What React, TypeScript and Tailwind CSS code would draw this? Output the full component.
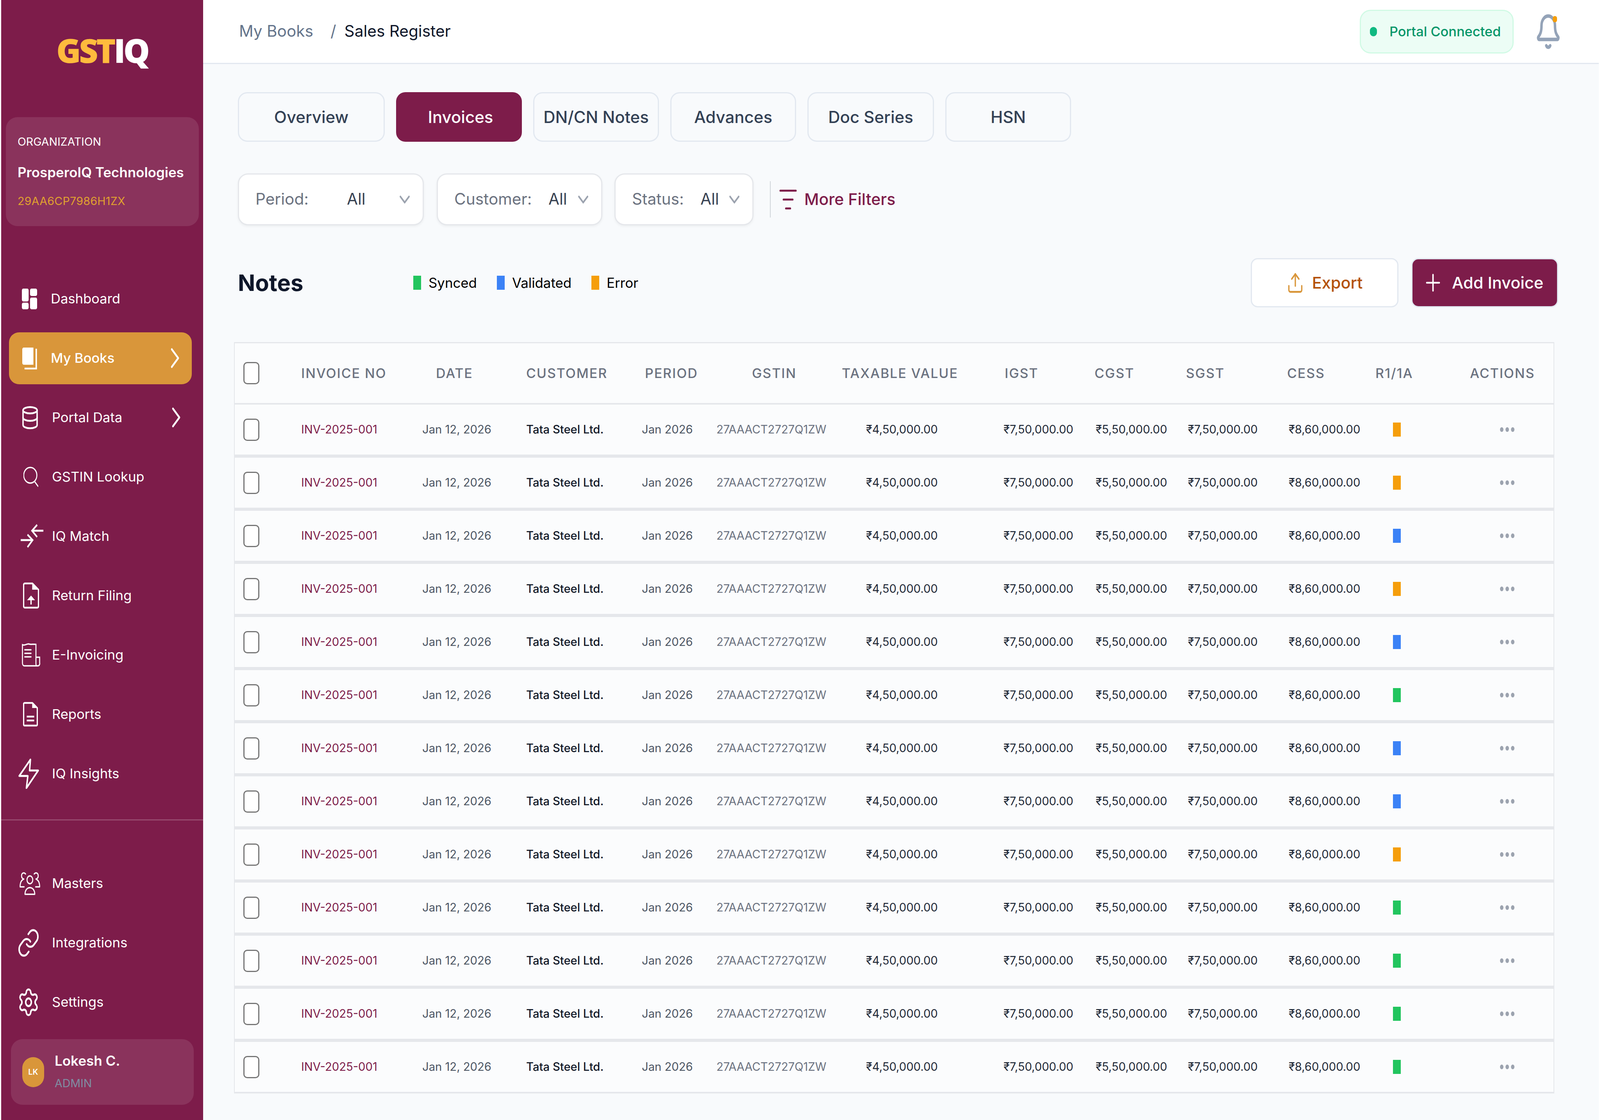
import React from 'react';
import { Bell, ChevronDown, ChevronRight, Database, Link, ListFilter, Plus, Settings, Upload } from 'lucide-react';

// the window is 4096 wide, so horizontal sizes are the reference's x 0.731
const DashboardIcon = () => (
  <svg viewBox="0 0 54 53" preserveAspectRatio="none" className="w-[39px] h-[53px] ml-[12px]" fill="white">
    <rect x="0" y="0" width="24" height="33" rx="5" />
    <rect x="29" y="0" width="25" height="19" rx="5" />
    <rect x="0" y="36" width="24" height="17" rx="5" />
    <rect x="29" y="23" width="25" height="30" rx="5" />
  </svg>
);

const BookIcon = () => (
  <svg viewBox="0 0 52 57" preserveAspectRatio="none" className="w-[38px] h-[57px] ml-[13px]" fill="none">
    <path d="M5 1H39V45H5a5 5 0 0 1-5-5V6a5 5 0 0 1 5-5Z" fill="white" />
    <path d="M49 4V55H8" stroke="white" strokeWidth="5" />
  </svg>
);

const SearchIcon = () => (
  <svg viewBox="0 0 52 52" preserveAspectRatio="none" className="w-[38px] h-[52px] ml-[16px]" fill="none" stroke="white" strokeWidth="3.5" strokeLinecap="round">
    <ellipse cx="24" cy="22" rx="23" ry="20" />
    <path d="M39 38L51 50" />
  </svg>
);

const MatchIcon = () => (
  <svg viewBox="0 0 80 62" preserveAspectRatio="none" className="w-[58px] h-[62px] ml-[9px]" fill="none" stroke="white" strokeWidth="5">
    <path d="M39 17H80M58 2L40 17L58 33" />
    <path d="M0 41H42M24 27L42 41L24 59" />
  </svg>
);

const ReturnIcon = () => (
  <svg viewBox="0 0 56 68" preserveAspectRatio="none" className="w-[41px] h-[68px] ml-[15px]" fill="none" stroke="white" strokeWidth="4.5">
    <path d="M6 3H33L54 19V61a4 4 0 0 1-4 4H6a4 4 0 0 1-4-4V7a4 4 0 0 1 4-4Z" strokeLinejoin="round" />
    <path d="M32 3L54 19H32Z" fill="white" stroke="none" />
    <path d="M28 57V40" />
    <path d="M14 46L28 34L42 46Z" fill="white" stroke="none" />
  </svg>
);

const InvoiceIcon = () => (
  <svg viewBox="0 0 64 60" preserveAspectRatio="none" className="w-[47px] h-[60px] ml-[12px]" fill="none" stroke="white" strokeWidth="3.5" strokeLinecap="round">
    <path d="M2 4C11 7 16 1 24 2C32 4 38 2 49 3V52C49 55 50 58 52 58H9C5 58 2 55 2 51Z" />
    <path d="M10 17H32M10 26H32M10 35H32" />
    <path d="M50 36H62V50a6 6 0 0 1-6 8H52" />
  </svg>
);

const ReportsIcon = () => (
  <svg viewBox="0 0 52 64" preserveAspectRatio="none" className="w-[38px] h-[64px] ml-[15px]" fill="none" stroke="white" strokeWidth="4.5">
    <path d="M5 3H33L50 16V58a3 3 0 0 1-3 3H5a3 3 0 0 1-3-3V6a3 3 0 0 1 3-3Z" strokeLinejoin="round" />
    <path d="M32 3L50 16H32Z" fill="white" stroke="none" />
    <path d="M13 38H39M13 48H39" />
  </svg>
);

const ZapIcon = () => (
  <svg viewBox="0 0 72 78" preserveAspectRatio="none" className="w-[53px] h-[78px] ml-[3px]" fill="none" stroke="white" strokeWidth="5" strokeLinejoin="round">
    <path d="M42 3L3 45H33L28 76L69 31H39Z" />
  </svg>
);

const UsersIcon = () => (
  <svg viewBox="0 0 72 59" preserveAspectRatio="none" className="w-[53px] h-[59px] ml-[6px]" fill="none" stroke="white" strokeWidth="3.5" strokeLinecap="round" strokeLinejoin="round">
    <circle cx="36" cy="20" r="10" />
    <path d="M19 57C19 46 27 40 36 40C45 40 53 46 53 57Z" />
    <path d="M21 5C16 0 7 2 7 10C7 14 10 17 15 18C8 20 2 26 2 38H16" />
    <path d="M51 5C56 0 65 2 65 10C65 14 62 17 57 18C64 20 70 26 70 38H56" />
  </svg>
);

const navTop = [
  { label: 'Dashboard', icon: <DashboardIcon />, tight: true },
  { label: 'My Books', icon: <BookIcon />, active: true, chevron: true, tight: true },
  { label: 'Portal Data', icon: <Database preserveAspectRatio="none" strokeWidth={1.8} className="w-[48px] h-[65px] ml-[9px]" />, chevron: true },
  { label: 'GSTIN Lookup', icon: <SearchIcon /> },
  { label: 'IQ Match', icon: <MatchIcon /> },
  { label: 'Return Filing', icon: <ReturnIcon /> },
  { label: 'E-Invoicing', icon: <InvoiceIcon /> },
  { label: 'Reports', icon: <ReportsIcon /> },
  { label: 'IQ Insights', icon: <ZapIcon /> },
];

const navBottom = [
  { label: 'Masters', icon: <UsersIcon /> },
  { label: 'Integrations', icon: <Link preserveAspectRatio="none" strokeWidth={1.6} className="w-[58px] h-[79px]" /> },
  { label: 'Settings', icon: <Settings preserveAspectRatio="none" strokeWidth={1.6} className="w-[58px] h-[79px]" /> },
];

const NavRow = ({ item }: { item: any }) => (
  <div className="h-[152px] flex items-center">
    <div className={`h-[133px] w-full flex items-center pl-[21px] rounded-[26px] text-white ${item.active ? 'bg-[#d9963a] font-medium' : ''}`}>
      <div className="w-[89px] shrink-0 flex items-center">{item.icon}</div>
      <span className={`text-[34.5px] ${item.tight ? 'ml-[-3px]' : ''}`}>{item.label}</span>
      {item.chevron && (
        <ChevronRight preserveAspectRatio="none" strokeWidth={1.5} className={`w-[66px] h-[90px] ml-auto ${item.active ? 'mr-[10px]' : 'mr-[7px]'}`} />
      )}
    </div>
  </div>
);

const Sidebar = () => (
  <aside className="w-[517px] shrink-0 bg-[#7d1c4a] flex flex-col">
    <div className="h-[300px] pt-[86px] flex justify-center">
      <div className="text-[85px] leading-none font-extrabold tracking-[-5px] [font-family:'Open_Sans',sans-serif]">
        <span className="text-[#ffbb3d]">GST</span>
        <span className="text-white">IQ</span>
      </div>
    </div>
    <div className="ml-[12px] w-[494px] h-[279px] rounded-[30px] bg-white/10 pl-[30px] flex flex-col">
      <div className="mt-[42px] text-[28.5px] leading-[42px] text-white">ORGANIZATION</div>
      <div className="mt-[29px] text-[35px] leading-[56px] font-semibold text-white whitespace-nowrap">ProsperoIQ Technologies</div>
      <div className="mt-[25px] text-[28.5px] leading-[42px] tracking-[0.35px] text-[#e0a22f]">29AA6CP7986H1ZX</div>
    </div>
    <nav className="mt-[110px] pl-[20px] pr-[29px]">
      {navTop.map((item) => <NavRow key={item.label} item={item} />)}
    </nav>
    <div className="mt-[41px] h-[3px] bg-white/20" />
    <nav className="mt-[85px] pl-[20px] pr-[29px]">
      {navBottom.map((item) => <NavRow key={item.label} item={item} />)}
    </nav>
    <div className="mt-[19px] ml-[25px] w-[468px] h-[168px] rounded-[30px] bg-white/10 flex items-center pl-[29px]">
      <div className="w-[56px] h-[77px] rounded-full bg-[#d9963a] flex items-center justify-center text-white text-[20px] font-semibold">LK</div>
      <div className="ml-[27px] flex flex-col">
        <span className="text-[35px] leading-[42px] font-semibold text-white">Lokesh C.</span>
        <span className="mt-[15px] text-[28.5px] leading-[44px] text-[#7f8ea3]">ADMIN</span>
      </div>
    </div>
  </aside>
);

const tabs = [
  { label: 'Overview', w: 'w-[376px]' },
  { label: 'Invoices', w: 'w-[322px] pl-[8px]', active: true },
  { label: 'DN/CN Notes', w: 'w-[322px]' },
  { label: 'Advances', w: 'w-[322px]' },
  { label: 'Doc Series', w: 'w-[324px]' },
  { label: 'HSN', w: 'w-[322px]' },
];

const filters = [
  { label: 'Period:', w: 'w-[476px]', labelW: 'w-[234px]', gap: 'mr-[33px]' },
  { label: 'Customer:', w: 'w-[424px]', labelW: 'w-[241px]', gap: 'mr-[31px]' },
  { label: 'Status:', w: 'w-[356px]', labelW: 'w-[175px]', gap: 'mr-[42px]' },
];

const Filter = ({ f }: { f: (typeof filters)[number] }) => (
  <div className={`${f.w} ${f.gap} h-[133px] rounded-[26px] border-[3px] border-[#e5e7eb] bg-white shadow-[0_3px_6px_rgba(0,0,0,0.05)] flex items-center pl-[42px] text-[40.6px]`}>
    <span className={`${f.labelW} text-[#6b7280]`}>{f.label}</span>
    <span className="text-[#374151]">All</span>
    <ChevronDown preserveAspectRatio="none" strokeWidth={2} className="w-[44px] h-[60px] ml-auto mr-[24px] text-[#9ca3af]" />
  </div>
);

const headerCols = 'grid grid-cols-[170px_345px_231px_304px_274px_230px_417px_230px_234px_259px_226px_242px_214px]';
const bodyCols = 'grid grid-cols-[170px_310px_266px_296px_191px_383px_352px_236px_236px_258px_267px_274px_137px]';

const headers = ['INVOICE NO', 'DATE', 'CUSTOMER', 'PERIOD', 'GSTIN', 'TAXABLE VALUE', 'IGST', 'CGST', 'SGST', 'CESS', 'R1/1A', 'ACTIONS'];

const statuses = [
  'bg-[#f59e0b]', 'bg-[#f59e0b]', 'bg-[#3b82f6]', 'bg-[#f59e0b]', 'bg-[#3b82f6]', 'bg-[#22c55e]', 'bg-[#3b82f6]',
  'bg-[#3b82f6]', 'bg-[#f59e0b]', 'bg-[#22c55e]', 'bg-[#22c55e]', 'bg-[#22c55e]', 'bg-[#22c55e]',
];

const Checkbox = () => (
  <input type="checkbox" className="appearance-none ml-[22px] w-[41px] h-[57px] rounded-[10px] border-[3px] border-[#767676] bg-white" />
);

const Row = ({ status }: { status: string }) => (
  <div className={`${bodyCols} h-[136px] last:h-[132px] items-center border-b-[8px] last:border-b-[4px] border-[#e5e7eb] text-[29.2px] whitespace-nowrap`}>
    <Checkbox />
    <span className="text-[#7d1c4a]">INV-2025-001</span>
    <span className="text-[#4b5563]">Jan 12, 2026</span>
    <span className="text-[#111827] font-medium">Tata Steel Ltd.</span>
    <span className="text-[#4b5563]">Jan 2026</span>
    <span className="text-[#6b7280]">27AAACT2727Q1ZW</span>
    <span className="text-[#1f2937]">₹4,50,000.00</span>
    <span className="text-[#1f2937]">₹7,50,000.00</span>
    <span className="text-[#1f2937]">₹5,50,000.00</span>
    <span className="text-[#1f2937]">₹7,50,000.00</span>
    <span className="text-[#1f2937]">₹8,60,000.00</span>
    <span className={`w-[20px] h-[36px] ${status}`} />
    <svg viewBox="0 0 50 12" preserveAspectRatio="none" className="w-[37px] h-[12px]" fill="#9ca3af">
      <circle cx="6" cy="6" r="6" />
      <circle cx="25" cy="6" r="6" />
      <circle cx="44" cy="6" r="6" />
    </svg>
  </div>
);

const Legend = ({ color, label }: { color: string; label: string }) => (
  <div className="flex items-center mr-[51px]">
    <span className={`w-[20px] h-[36px] ${color}`} />
    <span className="ml-[19px] text-[34.8px] text-black">{label}</span>
  </div>
);

export default function App() {
  return (
    <div className="w-[4096px] h-[2868px] bg-white px-[3px] flex overflow-hidden [font-family:Inter,sans-serif]">
      <Sidebar />
      <main className="flex-1 min-w-0 flex flex-col bg-[#f8fafc]">
        <header className="h-[164px] shrink-0 bg-white border-b-[3px] border-[#e2e8f0] flex items-center pl-[92px] text-[40.6px]">
          <span className="text-[#64748b]">My Books</span>
          <span className="ml-[44px] text-[#64748b]">/</span>
          <span className="ml-[21px] text-[#0f172a]">Sales Register</span>
          <div className="ml-auto w-[394px] h-[112px] rounded-[28px] border-[3px] border-[#d1fae5] bg-[#ecfdf5] flex items-center pl-[23px]">
            <span className="w-[18px] h-[24px] rounded-full bg-[#10b981]" />
            <span className="ml-[32px] text-[34.3px] font-medium text-[#059669]">Portal Connected</span>
          </div>
          <div className="relative ml-[62px] mr-[104px] w-[52px] h-[80px] flex items-center justify-center">
            <Bell preserveAspectRatio="none" strokeWidth={2.2} className="w-[69px] h-[96px] shrink-0 text-[#94a3b8]" />
            <span className="absolute top-0 right-[3px] w-[11px] h-[16px] rounded-full bg-[#f59e0b]" />
          </div>
        </header>
        <div className="pl-[79px]">
          <div className="mt-[72px] ml-[10px] flex gap-[29px]">
            {tabs.map((t) => (
              <div key={t.label} className={`${t.w} h-[127px] rounded-[24px] flex items-center justify-center text-[42px] font-medium ${t.active ? 'bg-[#7d1c4a] text-white' : 'border-[3px] border-[#e2e8f0] text-[#334155]'}`}>
                {t.label}
              </div>
            ))}
          </div>
          <div className="mt-[81px] ml-[10px] flex items-center">
            {filters.map((f) => <Filter key={f.label} f={f} />)}
            <span className="w-[2px] h-[93px] bg-[#d1d5db]" />
            <ListFilter preserveAspectRatio="none" strokeWidth={1.6} className="w-[49px] h-[78px] ml-[20px] text-[#7d1c4a]" />
            <span className="ml-[17px] text-[41px] font-medium text-[#7d1c4a]">More Filters</span>
          </div>
          <div className="mt-[84px] ml-[10px] h-[126px] flex items-center w-[3380px]">
            <h2 className="w-[449px] text-[58px] font-bold text-[#0f172a]">Notes</h2>
            <Legend color="bg-[#22c55e]" label="Synced" />
            <Legend color="bg-[#3b82f6]" label="Validated" />
            <Legend color="bg-[#f59e0b]" label="Error" />
            <button className="ml-auto w-[378px] h-[126px] rounded-[18px] border-[3px] border-[#e2e8f0] bg-white flex items-center justify-center text-[41.5px] font-medium text-[#b45309]">
              <Upload preserveAspectRatio="none" strokeWidth={1.8} className="w-[44px] h-[61px] text-[#d9963a]" />
              <span className="ml-[21px]">Export</span>
            </button>
            <button className="ml-[33px] w-[376px] h-[126px] rounded-[18px] border-[3px] border-[#e2e8f0] bg-[#7d1c4a] flex items-center pl-[25px] text-[41.5px] font-medium text-white">
              <Plus preserveAspectRatio="none" strokeWidth={1.6} className="w-[55px] h-[70px]" />
              <span className="ml-[21px]">Add Invoice</span>
            </button>
          </div>
          <div className="mt-[89px] w-[3380px] border-x-[2px] border-t-[3px] border-[#e5e7eb] bg-[#fbfcfd]">
            <div className={`${headerCols} h-[157px] items-center border-b-[4px] border-[#e5e7eb] text-[34px] font-medium tracking-[1.9px] text-[#6b7280] whitespace-nowrap`}>
              <Checkbox />
              {headers.map((h) => <span key={h}>{h}</span>)}
            </div>
            {statuses.map((s, i) => <Row key={i} status={s} />)}
          </div>
        </div>
      </main>
    </div>
  );
}
